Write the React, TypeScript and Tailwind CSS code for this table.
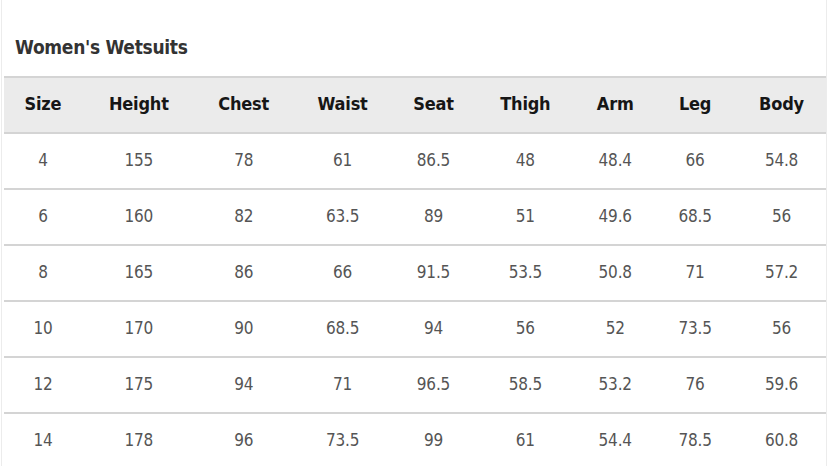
const columns = [
  { label: 'Size', width: 'w-[78px]' },
  { label: 'Height', width: 'w-[114px]' },
  { label: 'Chest', width: 'w-[96px]' },
  { label: 'Waist', width: 'w-[102px]' },
  { label: 'Seat', width: 'w-[80px]' },
  { label: 'Thigh', width: 'w-[104px]' },
  { label: 'Arm', width: 'w-[76px]' },
  { label: 'Leg', width: 'w-[84px]' },
  { label: 'Body', width: 'w-[89px]' },
];

const rows = [
  ['4', '155', '78', '61', '86.5', '48', '48.4', '66', '54.8'],
  ['6', '160', '82', '63.5', '89', '51', '49.6', '68.5', '56'],
  ['8', '165', '86', '66', '91.5', '53.5', '50.8', '71', '57.2'],
  ['10', '170', '90', '68.5', '94', '56', '52', '73.5', '56'],
  ['12', '175', '94', '71', '96.5', '58.5', '53.2', '76', '59.6'],
  ['14', '178', '96', '73.5', '99', '61', '54.4', '78.5', '60.8'],
];

export default function App() {
  return (
    <div className="h-[466px] w-[830px] overflow-hidden bg-white font-['DejaVu_Sans',sans-serif] font-stretch-condensed">
      <div className="ml-px mr-[3px] h-full border-x border-[#ececec] pl-[2px]">
        <h2 className="pl-[11px] pt-[35px] pb-[17px] text-[19px] font-bold leading-[24px] tracking-[-0.3px] text-[#333]">
          Women's Wetsuits
        </h2>
        <table className="table-fixed border-collapse">
          <thead>
            <tr className="bg-[#ebebeb]">
              {columns.map((c) => (
                <th
                  key={c.label}
                  className={`${c.width} h-[56px] border-y-2 border-[#d4d4d4] p-0 pb-[3px] text-center text-[18px] font-bold tracking-[-0.2px] text-[#161616]`}
                >
                  {c.label}
                </th>
              ))}
            </tr>
          </thead>
          <tbody>
            {rows.map((r) => (
              <tr key={r[0]} className="border-b-2 border-[#d4d4d4]">
                {r.map((v, i) => (
                  <td key={i} className="h-[56px] p-0 text-center text-[17px] tracking-[-0.2px] text-[#555]">
                    {v}
                  </td>
                ))}
              </tr>
            ))}
          </tbody>
        </table>
      </div>
    </div>
  );
}
